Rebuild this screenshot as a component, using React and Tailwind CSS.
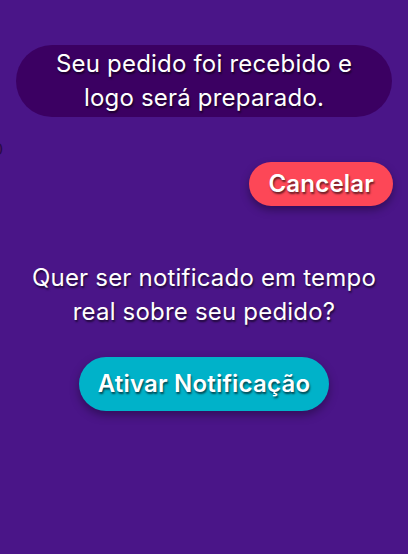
export default function App() {
  const shadow = { textShadow: '1px 2px 2px rgba(0,0,0,0.6)' };
  return (
    <div className="min-h-[554px] w-full bg-[#4a1588] text-white font-['Inter','Noto_Sans',sans-serif] tracking-[0.2px] overflow-hidden">
      <div className="px-4 pt-[45px]">
        <div
          className="rounded-[36px] bg-[#3b0062] px-[28px] py-[2px] text-center text-[24px] leading-[34px]"
          style={shadow}
        >
          Seu pedido foi recebido e logo será preparado.
        </div>
      </div>
      <div className="h-[45px] pt-[24px] -ml-[7px] text-[16px] leading-[16px] text-[#2a0a45]">0</div>
      <div className="flex justify-end px-[15px]">
        <button
          className="h-[44px] rounded-full bg-[#fd4757] px-[19px] text-[24px] font-semibold shadow-[0_4px_8px_rgba(0,0,0,0.35)]"
          style={shadow}
        >
          Cancelar
        </button>
      </div>
      <p className="mt-[55px] px-[20px] text-center text-[24px] leading-[34px]" style={shadow}>
        Quer ser notificado em tempo real sobre seu pedido?
      </p>
      <div className="mt-[28px] flex justify-center">
        <button
          className="h-[54px] rounded-full bg-[#00b2c9] px-[19px] text-[24px] font-semibold shadow-[0_4px_10px_rgba(0,0,0,0.35)]"
          style={shadow}
        >
          Ativar Notificação
        </button>
      </div>
    </div>
  );
}
